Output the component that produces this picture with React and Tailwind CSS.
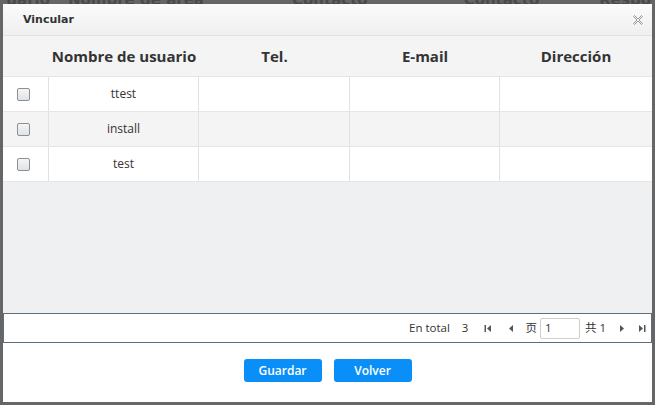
import React from 'react';

const users = ['ttest', 'install', 'test'];

const Checkbox = () => (
  <span className="block w-[13px] h-[13px] rounded-[2px] border border-[#8e8f8f] bg-gradient-to-b from-[#f4f5f6] to-[#dfe3e8]" />
);

const Tri = ({ dir = 'left', bar = false }) => (
  <svg width="9" height="9" viewBox="0 0 9 9" className="text-[#555]">
    {dir === 'left' ? (
      <>
        {bar && <rect x="0.5" y="1" width="1.5" height="7" fill="currentColor" />}
        <path d="M3 4.5 L7 1 L7 8 Z" fill="currentColor" />
      </>
    ) : (
      <>
        <path d="M2 1 L6 4.5 L2 8 Z" fill="currentColor" />
        {bar && <rect x="7" y="1" width="1.5" height="7" fill="currentColor" />}
      </>
    )}
  </svg>
);

const CloseIcon = () => (
  <svg width="10" height="10" viewBox="0 0 10 10">
    <path
      d="M0.5 1.5 L1.5 0.5 L5 4 L8.5 0.5 L9.5 1.5 L6 5 L9.5 8.5 L8.5 9.5 L5 6 L1.5 9.5 L0.5 8.5 L4 5 Z"
      fill="#f4f4f4"
      stroke="#8e8e8e"
      strokeWidth="0.9"
    />
  </svg>
);

export default function App() {
  return (
    <div
      className="w-[655px] h-[405px] bg-[#666666] overflow-hidden flex flex-col"
      style={{ fontFamily: '"Open Sans", "Noto Sans CJK SC", sans-serif' }}
    >
      {/* page behind the dialog */}
      <div className="h-[4px] overflow-hidden shrink-0">
        <div
          className="flex -mt-[11px] text-[15px] font-bold text-[#4a4a4a] whitespace-nowrap"
          style={{ fontFamily: '"DejaVu Sans", sans-serif' }}
        >
          <span className="w-[50px] text-right">uario</span>
          <span className="ml-[18px]">Nombre de área</span>
          <span className="ml-[88px]">Contacto</span>
          <span className="ml-[96px]">Contacto</span>
          <span className="ml-[60px]">Respo</span>
        </div>
      </div>

      <div className="ml-[3px] w-[649px] h-[398px] bg-white flex flex-col">
        {/* Title bar */}
        <div className="h-[32px] shrink-0 flex items-center justify-between pl-[20px] pr-[9px] pt-[2px] bg-gradient-to-b from-[#fbfbfb] to-[#efefef] border-b border-[#e2e2e2]">
          <span
            className="text-[11px] font-bold text-[#333]"
            style={{ fontFamily: '"DejaVu Sans", sans-serif' }}
          >
            Vincular
          </span>
          <span className="-mt-[2px] flex">
            <CloseIcon />
          </span>
        </div>

        {/* Table header */}
        <div className="h-[41px] shrink-0 grid grid-cols-[46px_150px_151px_150px_1fr] items-center bg-[#f4f4f4] border-b border-[#e6e6e6] text-[15px] font-bold text-[#333] whitespace-nowrap">
          <span />
          <span className="text-center">Nombre de usuario</span>
          <span className="text-center">Tel.</span>
          <span className="text-center">E-mail</span>
          <span className="text-center">Dirección</span>
        </div>

        {/* Rows */}
        {users.map((u, i) => (
          <div
            key={u}
            className={`h-[35px] shrink-0 grid grid-cols-[46px_150px_151px_150px_1fr] border-b border-[#e6e6e6] text-[12px] text-[#333] ${
              i % 2 === 1 ? 'bg-[#f4f4f4]' : 'bg-white'
            }`}
          >
            <div className="flex items-center justify-center pr-[4px] border-r border-[#e2e2e2]">
              <Checkbox />
            </div>
            <div className="flex items-center justify-center border-r border-[#e2e2e2]">{u}</div>
            <div className="border-r border-[#e2e2e2]" />
            <div className="border-r border-[#e2e2e2]" />
            <div />
          </div>
        ))}

        <div className="flex-1 bg-[#eff0f1]" />

        {/* Pager */}
        <div className="h-[30px] shrink-0 border border-[#5e6f7b] bg-white flex items-center justify-end pr-[5px] text-[11.5px] text-[#333]">
          <span>En total</span>
          <span className="ml-[12px]">3</span>
          <span className="ml-[16px] flex"><Tri dir="left" bar /></span>
          <span className="ml-[13px] flex"><Tri dir="left" /></span>
          <span className="ml-[10px]">页</span>
          <span className="ml-[3px] w-[40px] h-[21px] border border-[#cfcfcf] rounded-[2px] flex items-center pl-[4px]">1</span>
          <span className="ml-[5px]">共 1</span>
          <span className="ml-[12px] flex"><Tri dir="right" /></span>
          <span className="ml-[10px] flex"><Tri dir="right" bar /></span>
        </div>

        {/* Footer */}
        <div className="h-[59px] shrink-0 flex justify-center pt-[16px] gap-[12px]">
          <button className="w-[78px] h-[23px] rounded-[3px] bg-[#0a8ff8] text-white text-[12px] font-semibold">
            Guardar
          </button>
          <button className="w-[78px] h-[23px] rounded-[3px] bg-[#0a8ff8] text-white text-[12px] font-semibold">
            Volver
          </button>
        </div>
      </div>
    </div>
  );
}
